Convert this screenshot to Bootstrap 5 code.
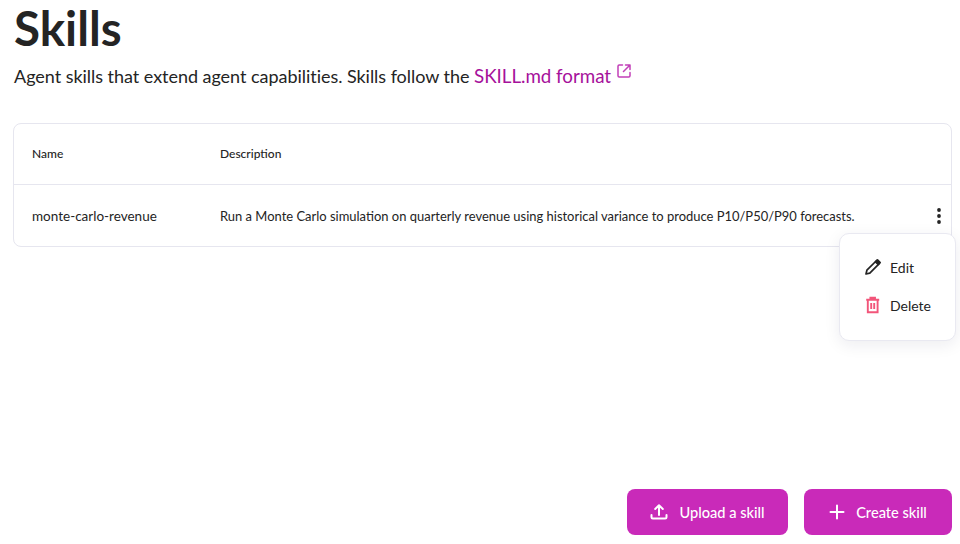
<!DOCTYPE html>
<html lang="en"><head><meta charset="utf-8"><title>Skills</title>
<link href="https://cdn.jsdelivr.net/npm/bootstrap@5.3.0/dist/css/bootstrap.min.css" rel="stylesheet">
<style>
html,body{height:100%;overflow:hidden}
body{font-family:"Lato","Noto Sans",sans-serif;color:#242424;background:#fff}
.page-shell{height:544px;padding:0 8px 9px 14px;position:relative}
.page-title{font-size:47.5px;line-height:55px;font-weight:700;margin:0;color:#242424}
.page-sub{font-size:18px;line-height:26px;margin:8px 0 0;letter-spacing:-.002em}
.page-sub a{color:#a6119b;text-decoration:none;font-size:18.8px}
.ext-ico{width:14px;height:14px;vertical-align:5px;margin-left:6px}
.skills-box{margin-top:34px;margin-left:-1px;border:1px solid #e6e6ef;border-radius:8px;height:124px;position:relative}
.skills-head{height:61px;border-bottom:1px solid #e6e6ef;font-size:12px;font-weight:500}
.skills-row{height:61px;font-size:12.96px;padding-top:2px}
.col-name{width:206px;padding-left:18px;flex:none}
.name-cell{font-size:13.5px}
.kebab{width:14px;flex:none;margin-bottom:2px;line-height:0}
.pop-menu{position:absolute;top:233px;left:839px;width:117px;height:108px;background:#fff;border:1px solid #e9e9f1;border-radius:10px;box-shadow:0 4px 16px rgba(30,30,60,.08);padding:23px 0 0 24px;font-size:14px}
.pop-item{height:38px;gap:8px}
.pop-item svg{margin-top:1px}
.act-btn{background:#c92ab9;color:#fff;border:0;border-radius:8px;height:46px;font-size:14.6px;font-weight:500;gap:11px;padding-top:7px}
.act-btn svg{margin-top:-2px}
.act-btn:hover{background:#c92ab9;color:#fff}
.btn-up{width:161px}.btn-new{width:148px}
</style></head>
<body>
<div class="page-shell d-flex flex-column">
<h1 class="page-title">Skills</h1>
<p class="page-sub">Agent skills that extend agent capabilities. Skills follow the <a href="#">SKILL.md format<svg class="ext-ico" viewBox="0 0 14 14" fill="none" stroke="#c23fb8" stroke-width="1.5" stroke-linecap="round" stroke-linejoin="round"><path d="M5.5 1H2.2A1.2 1.2 0 0 0 1 2.2v9.6A1.2 1.2 0 0 0 2.2 13h9.6a1.2 1.2 0 0 0 1.2-1.2V8.5M8.5 1H13v4.5M13 1 6.5 7.5"/></svg></a></p>
<div class="skills-box">
<div class="skills-head d-flex align-items-center"><div class="col-name">Name</div><div>Description</div></div>
<div class="skills-row d-flex align-items-center"><div class="col-name name-cell">monte-carlo-revenue</div><div class="flex-grow-1">Run a Monte Carlo simulation on quarterly revenue using historical variance to produce P10/P50/P90 forecasts.</div>
<div class="kebab"><svg width="4" height="16" viewBox="0 0 4 16" fill="#242424"><circle cx="2" cy="2" r="1.9"/><circle cx="2" cy="8" r="1.9"/><circle cx="2" cy="14" r="1.9"/></svg></div></div>
</div>
<div class="mt-auto d-flex justify-content-end gap-3">
<button class="btn act-btn btn-up d-flex align-items-center justify-content-center"><svg width="18" height="18" viewBox="0 0 18 18" fill="none" stroke="#fff" stroke-width="2" stroke-linecap="round" stroke-linejoin="round"><path d="M9 12V2.5M5.2 6 9 2.3 12.8 6M1.5 12v2.2a1.3 1.3 0 0 0 1.3 1.3h12.4a1.3 1.3 0 0 0 1.3-1.3V12"/></svg>Upload a skill</button>
<button class="btn act-btn btn-new d-flex align-items-center justify-content-center"><svg width="16" height="16" viewBox="0 0 16 16" fill="none" stroke="#fff" stroke-width="2" stroke-linecap="round"><path d="M8 1.5v13M1.5 8h13"/></svg>Create skill</button>
</div>
<div class="pop-menu">
<div class="pop-item d-flex align-items-start"><svg width="18" height="18" viewBox="0 0 18 18" fill="none" stroke="#242424" stroke-width="1.7" stroke-linejoin="round"><path d="M2 16l.9-3.8L12.6 2.5l2.9 2.9L5.8 15.1z"/><path d="M13.5 1.8l2.7 2.7-2 2-2.7-2.7z" fill="#242424"/></svg><span>Edit</span></div>
<div class="pop-item d-flex align-items-start"><svg width="18" height="18" viewBox="0 0 18 18" fill="none" stroke="#f2557a" stroke-width="1.9"><path d="M2.2 3.8h13M6.4 3.8V1.8h4.6v2M3.8 3.8v12.4h9.8V3.8M7.2 7v6M10.2 7v6"/></svg><span>Delete</span></div>
</div>
</div>
<script src="https://cdn.jsdelivr.net/npm/bootstrap@5.3.0/dist/js/bootstrap.bundle.min.js"></script>
</body></html>
